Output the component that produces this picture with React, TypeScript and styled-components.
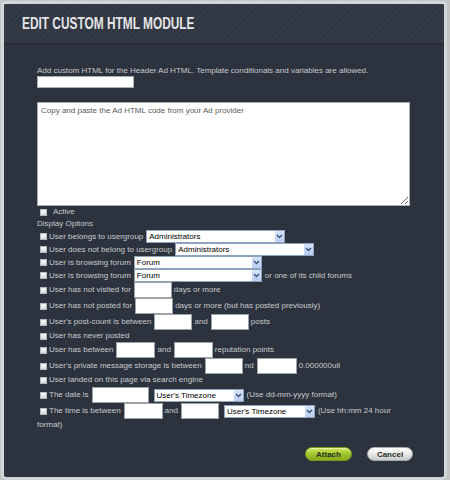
import React from "react";
import styled, { createGlobalStyle } from "styled-components";

const GlobalStyle = createGlobalStyle`
  html, body { margin: 0; padding: 0; }
  body {
    background: #c2c4c6;
    font-family: "Liberation Sans", Arial, sans-serif;
  }
`;

const Page = styled.div`
  width: 450px;
  height: 480px;
  box-sizing: border-box;
  padding: 1px 3px 0 1px;
  overflow: hidden;
  background: #c2c4c6;
`;

const Modal = styled.div`
  height: 100%;
  box-sizing: border-box;
  border: 3px solid #d4d5d6;
  border-radius: 5px;
  background: #2d333e;
  display: flex;
  flex-direction: column;
  overflow: hidden;
`;

const Header = styled.div`
  height: 40px;
  flex: none;
  box-sizing: border-box;
  padding-left: 18px;
  display: flex;
  align-items: center;
  border-bottom: 1px solid #252a32;
  background: repeating-linear-gradient(
    135deg,
    #2f3641 0px,
    #2f3641 2px,
    #343b46 2px,
    #343b46 4px
  );
`;

const Title = styled.h1`
  margin: 0;
  display: inline-block;
  font-size: 16.5px;
  font-weight: bold;
  color: #e4e5e6;
  transform: scaleX(0.72);
  transform-origin: left center;
  white-space: nowrap;
`;

const Body = styled.div`
  padding: 21px 33px 0 33px;
  color: #c8cacc;
  font-size: 8px;
  line-height: 12px;
  display: flex;
  flex-direction: column;
`;

const Intro = styled.div`
  white-space: nowrap;
  height: 11px;
  line-height: 11px;
`;

const NameInput = styled.input`
  display: block;
  width: 97px;
  height: 12px;
  box-sizing: border-box;
  border: 1px solid #a9adb2;
  background: #fff;
  margin: 0;
  padding: 0 2px;
`;

const CodeArea = styled.textarea`
  display: block;
  margin-top: 14px;
  width: 373px;
  height: 104px;
  box-sizing: border-box;
  border: 1px solid #a9adb2;
  background: #fff;
  padding: 3px;
  font-family: "Liberation Sans", Arial, sans-serif;
  font-size: 8px;
  resize: both;
  &::placeholder {
    color: #5a5a5a;
  }
`;

const Row = styled.div<{ $h: number }>`
  display: flex;
  flex-wrap: wrap;
  align-items: center;
  align-content: flex-start;
  min-height: ${(p) => p.$h}px;
  line-height: 12px;
  white-space: nowrap;
`;

const Line = styled.div<{ $h: number }>`
  display: flex;
  align-items: center;
  height: ${(p) => p.$h}px;
`;

const Text = styled.span<{ $gap?: number }>`
  margin-left: ${(p) => p.$gap ?? 0}px;
`;

const Check = styled.span`
  display: inline-block;
  flex: none;
  width: 7px;
  height: 7px;
  box-sizing: border-box;
  margin: 0 2px 0 3px;
  border: 1px solid #b4b8bc;
  background: linear-gradient(#fafafa, #d8dadc);
`;

const Field = styled.input<{ $w: number }>`
  display: block;
  flex: none;
  width: ${(p) => p.$w}px;
  height: 16px;
  box-sizing: border-box;
  margin: 0 2px 0 3px;
  padding: 0 2px;
  border: 1px solid #9ea3a8;
  background: #fff;
`;

const Select = styled.span<{ $w: number }>`
  display: flex;
  flex: none;
  width: ${(p) => p.$w}px;
  height: 13px;
  box-sizing: border-box;
  margin: 0 3px;
  border: 1px solid #8fa3bd;
  background: #fff;
  color: #000;
  align-items: stretch;
`;

const SelectValue = styled.span`
  flex: 1;
  padding-left: 2px;
  line-height: 11px;
  font-size: 8px;
  overflow: hidden;
  white-space: nowrap;
`;

const SelectArrow = styled.span`
  width: 9px;
  flex: none;
  background: linear-gradient(#d6e3fb, #b9cdf3);
  display: flex;
  align-items: center;
  justify-content: center;
`;

const Buttons = styled.div`
  display: flex;
  justify-content: flex-end;
  gap: 15px;
  margin-top: 16px;
  margin-right: -2px;
`;

const PillButton = styled.button<{ $variant: "primary" | "secondary"; $w: number }>`
  width: ${(p) => p.$w}px;
  height: 14px;
  border-radius: 7px;
  padding: 0;
  font-family: "Liberation Sans", Arial, sans-serif;
  font-size: 8px;
  font-weight: bold;
  color: #2a2e22;
  cursor: pointer;
  border: 1px solid ${(p) => (p.$variant === "primary" ? "#7b9a1c" : "#a8aaac")};
  background: ${(p) =>
    p.$variant === "primary"
      ? "linear-gradient(#d3ea5c, #9cc22a 55%, #86ad1d)"
      : "linear-gradient(#ffffff, #e6e6e6 55%, #c9caca)"};
  box-shadow: inset 0 1px 0 rgba(255, 255, 255, 0.5);
`;

const Chevron = () => (
  <svg width="7" height="5" viewBox="0 0 7 5">
    <path d="M1 1 L3.5 3.5 L6 1" fill="none" stroke="#3c5278" strokeWidth="1.4" />
  </svg>
);

const Dropdown = ({ w, value }: { w: number; value: string }) => (
  <Select $w={w}>
    <SelectValue>{value}</SelectValue>
    <SelectArrow>
      <Chevron />
    </SelectArrow>
  </Select>
);

export default function App() {
  return (
    <Page>
      <GlobalStyle />
      <Modal>
        <Header>
          <Title>EDIT CUSTOM HTML MODULE</Title>
        </Header>
        <Body>
          <Intro>
            Add custom HTML for the Header Ad HTML. Template conditionals and variables are allowed.
          </Intro>
          <NameInput type="text" />
          <CodeArea placeholder="Copy and paste the Ad HTML code from your Ad provider" />

          <Row $h={12}>
            <Check />
            <Text $gap={4}>Active</Text>
          </Row>
          <Row $h={12}>
            <Text>Display Options</Text>
          </Row>
          <Row $h={12}>
            <Check />
            <Text>User belongs to usergroup</Text>
            <Dropdown w={139} value="Administrators" />
          </Row>
          <Row $h={13}>
            <Check />
            <Text>User does not belong to usergroup</Text>
            <Dropdown w={139} value="Administrators" />
          </Row>
          <Row $h={13}>
            <Check />
            <Text>User is browsing forum</Text>
            <Dropdown w={128} value="Forum" />
          </Row>
          <Row $h={12}>
            <Check />
            <Text>User is browsing forum</Text>
            <Dropdown w={128} value="Forum" />
            <Text>or one of its child forums</Text>
          </Row>
          <Row $h={16}>
            <Check />
            <Text>User has not visited for</Text>
            <Field $w={38} />
            <Text>days or more</Text>
          </Row>
          <Row $h={16}>
            <Check />
            <Text>User has not posted for</Text>
            <Field $w={38} />
            <Text>days or more (but has posted previously)</Text>
          </Row>
          <Row $h={16}>
            <Check />
            <Text>User's post-count is between</Text>
            <Field $w={38} />
            <Text>and</Text>
            <Field $w={38} />
            <Text>posts</Text>
          </Row>
          <Row $h={12}>
            <Check />
            <Text>User has never posted</Text>
          </Row>
          <Row $h={16}>
            <Check />
            <Text>User has between</Text>
            <Field $w={39} />
            <Text>and</Text>
            <Field $w={39} />
            <Text>reputation points</Text>
          </Row>
          <Row $h={16}>
            <Check />
            <Text>User's private message storage is between</Text>
            <Field $w={38} />
            <Text>nd</Text>
            <Field $w={40} />
            <Text>0.000000ull</Text>
          </Row>
          <Row $h={13}>
            <Check />
            <Text>User landed on this page via search engine</Text>
          </Row>
          <Row $h={15}>
            <Check />
            <Text>The date is</Text>
            <Field $w={57} />
            <Dropdown w={90} value="User's Timezone" />
            <Text>(Use dd-mm-yyyy format)</Text>
          </Row>
          <Row $h={16}>
            <Line $h={16}>
              <Check />
              <Text>The time is between</Text>
              <Field $w={39} />
              <Text>and</Text>
              <Field $w={38} />
              <Dropdown w={91} value="User's Timezone" />
              <Text>(Use hh:mm 24 hour</Text>
            </Line>
            <Line $h={12}>
              <Text>format)</Text>
            </Line>
          </Row>

          <Buttons>
            <PillButton $variant="primary" $w={47}>
              Attach
            </PillButton>
            <PillButton $variant="secondary" $w={46}>
              Cancel
            </PillButton>
          </Buttons>
        </Body>
      </Modal>
    </Page>
  );
}
